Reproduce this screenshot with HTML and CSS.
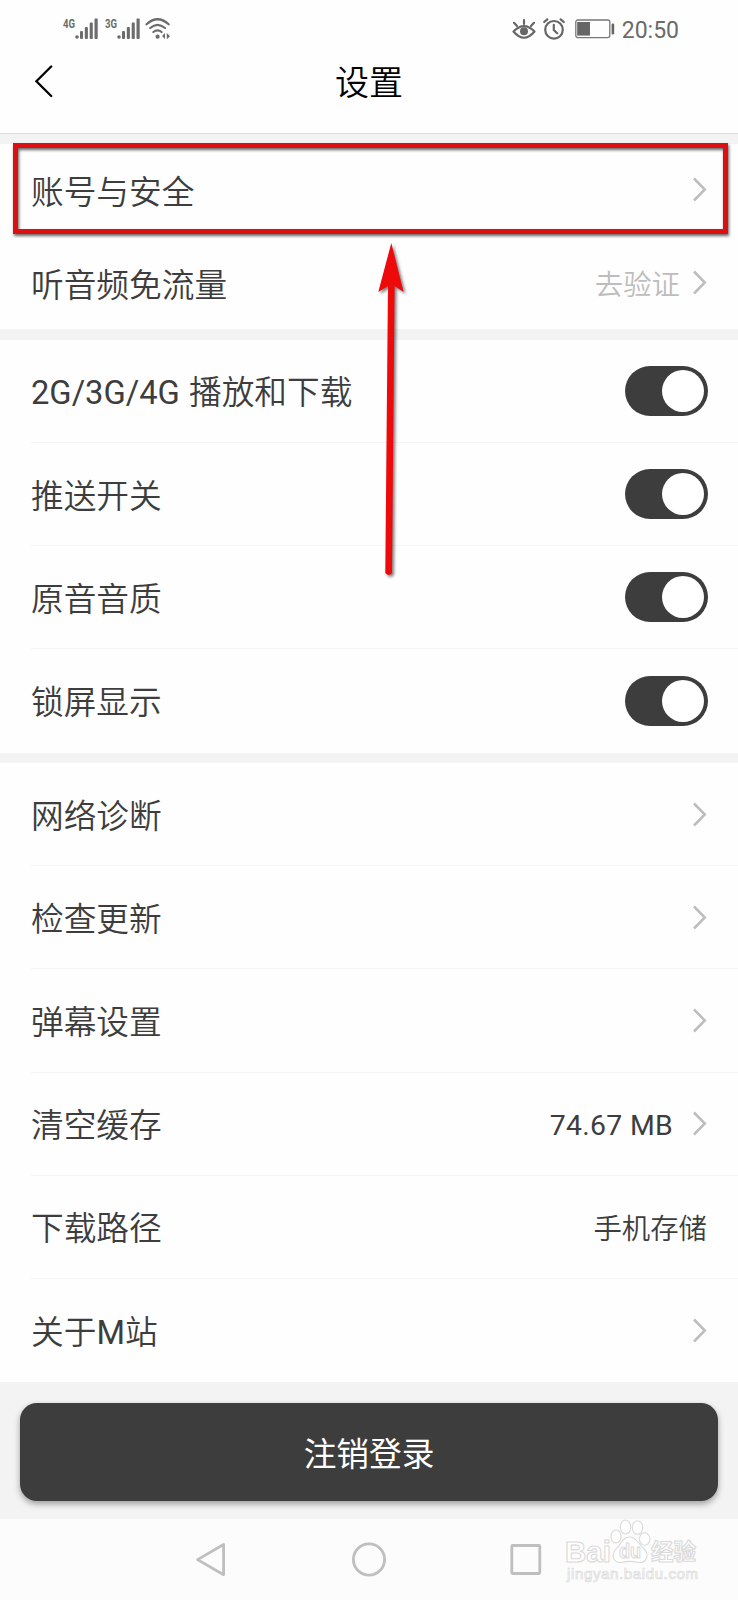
FILE: index.html
```html
<!DOCTYPE html>
<html lang="zh-CN">
<head>
    <meta charset="UTF-8">
    <meta name="viewport" content="width=device-width, initial-scale=1.0">
    <title>设置</title>
    <link rel="stylesheet" href="styles.css">
</head>
<body>
    <svg class="defs" width="0" height="0">
        <symbol id="chevron" viewBox="0 0 14 25">
            <path d="M1 1.5 L11.8 12.5 L1 23.5" fill="none" stroke="#bdbdbd" stroke-width="2.5"/>
        </symbol>
        <symbol id="signal" viewBox="0 0 24 22">
            <g fill="#6c6c6c">
                <circle cx="2" cy="19" r="1.8"/>
                <rect x="5" y="13" width="3" height="8" rx="1"/>
                <rect x="9.8" y="9" width="3.1" height="12" rx="1"/>
                <rect x="14.7" y="4.6" width="3.1" height="16.4" rx="1"/>
                <rect x="19.5" y="0.6" width="3.2" height="20.4" rx="1"/>
            </g>
        </symbol>
    </svg>
    <div id="content">
        <header>
            <div class="status">
                <div class="statusLeft">
                    <svg class="net" width="13" height="20"><text x="0" y="13.5" textLength="12" lengthAdjust="spacingAndGlyphs">4G</text></svg>
                    <svg class="signal"><use href="#signal"/></svg>
                    <svg class="net second" width="13" height="20"><text x="0" y="13.5" textLength="12" lengthAdjust="spacingAndGlyphs">3G</text></svg>
                    <svg class="signal"><use href="#signal"/></svg>
                    <svg class="wifi" width="26" height="22" viewBox="0 0 26 22">
                        <g fill="none" stroke="#6c6c6c" stroke-width="2.2" stroke-linecap="round">
                            <path d="M1.5 6.3 Q12.5 -3.8 23.7 6.3"/>
                            <path d="M5.2 10 Q12.5 3.6 20 10"/>
                            <path d="M8.4 14 Q12.5 10.6 16.6 14"/>
                        </g>
                        <circle cx="12.6" cy="18.7" r="2.1" fill="#6c6c6c"/>
                        <path d="M17 18 L20 15 V21 Z M25 18.2 L21.8 15 V21.2 Z" fill="#6c6c6c"/>
                    </svg>
                </div>
                <div class="statusRight">
                    <svg class="eye" width="24" height="22" viewBox="0 0 24 22">
                        <g fill="none" stroke="#666" stroke-width="2.2" stroke-linecap="round">
                            <path d="M1.5 12.5 Q12 1.8 22.5 12.5 Q12 25 1.5 12.5 Z" stroke-linejoin="round"/>
                            <path d="M12 5 V1.2 M5 7 L2 3.8 M19 7 L22 3.8"/>
                        </g>
                        <circle cx="12" cy="12.2" r="4" fill="#666"/>
                    </svg>
                    <svg class="alarm" width="22" height="22" viewBox="0 0 22 22">
                        <g fill="none" stroke="#666" stroke-width="2.2" stroke-linecap="round">
                            <circle cx="11" cy="11.8" r="8.8"/>
                            <path d="M10.8 6.8 V12 L14.2 15.3 M1.2 4 L4.3 1.3 M20.8 4 L17.7 1.3"/>
                        </g>
                    </svg>
                    <svg class="battery" width="40" height="20" viewBox="0 0 40 20">
                        <rect x="0.8" y="1" width="34" height="17.6" rx="2" fill="none" stroke="#777" stroke-width="1.3"/>
                        <rect x="2.2" y="3" width="12.8" height="13.6" fill="#666"/>
                        <rect x="36.6" y="4.5" width="2.6" height="11" rx="1.2" fill="#666"/>
                    </svg>
                    <span class="time">20:50</span>
                </div>
            </div>
            <div class="title">
                <svg class="back" width="18" height="33" viewBox="0 0 18 33">
                    <path d="M16.2 1.5 L1.4 16.2 L16.2 31" fill="none" stroke="#000" stroke-width="2.3" stroke-linecap="round"/>
                </svg>
                <h1>设置</h1>
            </div>
        </header>

        <section class="account">
            <div class="row"><label>账号与安全</label><svg class="chevron"><use href="#chevron"/></svg></div>
            <div class="row"><label>听音频免流量</label><span class="hint">去验证</span><svg class="chevron"><use href="#chevron"/></svg></div>
        </section>

        <section>
            <div class="row"><label><span class="latin">2G/3G/4G </span>播放和下载</label><span class="switch"></span></div>
            <div class="row"><label>推送开关</label><span class="switch"></span></div>
            <div class="row"><label>原音音质</label><span class="switch"></span></div>
            <div class="row"><label>锁屏显示</label><span class="switch"></span></div>
        </section>

        <section>
            <div class="row"><label>网络诊断</label><svg class="chevron"><use href="#chevron"/></svg></div>
            <div class="row"><label>检查更新</label><svg class="chevron"><use href="#chevron"/></svg></div>
            <div class="row"><label>弹幕设置</label><svg class="chevron"><use href="#chevron"/></svg></div>
            <div class="row"><label>清空缓存</label><span class="value size">74.67 MB</span><svg class="chevron"><use href="#chevron"/></svg></div>
            <div class="row"><label>下载路径</label><span class="value">手机存储</span></div>
            <div class="row"><label>关于<span class="latin">M</span>站</label><svg class="chevron"><use href="#chevron"/></svg></div>
        </section>

        <div class="logout">
            <button type="button">注销登录</button>
        </div>

        <footer>
            <svg width="32" height="36" viewBox="0 0 32 36">
                <path d="M27.6 2.5 V32.7 L1.6 17.6 Z" fill="none" stroke="#bfbfbf" stroke-width="2.8" stroke-linejoin="round"/>
            </svg>
            <svg width="36" height="36" viewBox="0 0 36 36">
                <circle cx="18" cy="17.5" r="15.6" fill="none" stroke="#bfbfbf" stroke-width="2.8"/>
            </svg>
            <svg width="32" height="36" viewBox="0 0 32 36">
                <rect x="1.8" y="3.5" width="28" height="28" rx="1" fill="none" stroke="#bfbfbf" stroke-width="2.8"/>
            </svg>
        </footer>

        <!-- highlight box and arrow -->
        <div class="mark"></div>
        <svg class="arrow" width="40" height="345" viewBox="0 0 40 345">
            <path d="M21.3 3 L33.6 52 L24.6 46 L22 333 Q18.5 337 15.3 333 L18 46 L8.3 52 Z" fill="#ee0a0a"/>
        </svg>

        <!-- watermark -->
        <svg class="watermark" width="150" height="75" viewBox="0 0 150 75">
            <g fill="#fff" stroke="#dadada" stroke-width="1.1">
                <text x="5" y="51.5" font-size="30" font-weight="700" textLength="46" lengthAdjust="spacingAndGlyphs">Bai</text>
                <ellipse cx="56" cy="26.5" rx="5" ry="6.5"/>
                <ellipse cx="65.5" cy="17" rx="5.2" ry="7"/>
                <ellipse cx="77.5" cy="17.5" rx="5.2" ry="6.8"/>
                <ellipse cx="84.7" cy="29" rx="5.2" ry="6.3"/>
                <path d="M70 27 C77 27 79 35 84 39 C90 45 86 53 79 52.5 C73 51 67 51 61 52.5 C53 53 51 45 56 39 C61 35 62 27 70 27 Z"/>
                <text x="59" y="48" font-size="20" font-weight="700" textLength="22" lengthAdjust="spacingAndGlyphs">du</text>
                <text class="cjk" x="91" y="50" font-size="22.5" font-weight="700" textLength="45">经验</text>
                <text x="7" y="69" font-size="15" stroke-width="0.7" textLength="131">jingyan.baidu.com</text>
            </g>
        </svg>
    </div>
</body>
</html>
```
FILE: styles.css
```css
html, body {
    margin: 0; padding: 0;
    background: #f3f3f3;
    font-family: Roboto, "Noto Sans CJK SC", sans-serif;
    color: #3d3d3d;
}
#content {
    position: relative;
    width: 738px; height: 1600px;
    overflow: hidden;
    display: flex; flex-direction: column;
}
.defs { position: absolute; }
header {
    height: 133px;
    background: #fefefe;
    border-bottom: 1px solid #dcdcdc;
    margin-bottom: 10px;
}
.status {
    display: flex; justify-content: space-between;
    height: 50px;
    box-sizing: border-box;
    padding: 18px 59px 0 63px;
}
.statusLeft, .statusRight { display: flex; align-items: flex-start; }
.net {
    margin: -4px -1px 0 0;
    font: 700 12.5px Roboto, sans-serif;
    fill: #6c6c6c;
}
.second { margin-left: 6px; }
.signal { width: 24px; height: 22px; }
.wifi { margin-left: 4px; }
.eye { margin: 1px 7px 0 0; }
.alarm { margin-right: 10px; }
.battery { margin: 1px 7px 0 0; }
.time { padding-top: 1px; font-size: 23px; line-height: 24px; color: #6a6a6a; }
.title {
    display: grid;
    grid-template-columns: 60px 1fr 60px;
    align-items: center;
    height: 62px;
}
.back { margin-left: 35px; }
h1 {
    margin: 0; padding-top: 3px;
    text-align: center;
    font-size: 34px; line-height: 40px; font-weight: 350;
    color: #000;
}
section { background: #fefefe; margin-bottom: 10.4px; }
.row {
    display: flex; align-items: center;
    height: 103.2px;
    margin-left: 31px; padding-right: 31px;
    box-sizing: border-box;
    border-bottom: 1px solid #f5f5f5;
}
.row:last-child { border-bottom-color: transparent; }
.account { margin-bottom: 10.5px; }
.account .row { height: 92.7px; border-bottom-color: transparent; }
.row label {
    flex: 1;
    padding-top: 5px;
    font-size: 32.7px; line-height: 40px; font-weight: 350;
}
.account .row label, .account .row .hint { padding-top: 7px; }
.row .latin { font-weight: 400; word-spacing: 1px; }
.chevron { width: 14px; height: 25px; }
.hint, .value {
    padding-top: 6px;
    font-size: 28.4px; line-height: 36px; font-weight: 350;
}
.hint { color: #bdbdbd; margin-right: 13px; }
.size { margin-right: 20px; padding-top: 5px; font-weight: 400; letter-spacing: 0.3px; }
.switch {
    display: flex; justify-content: flex-end;
    width: 83px; height: 50px;
    box-sizing: border-box;
    padding: 4px;
    margin-right: -1px;
    border-radius: 25px;
    background: #3d3d3d;
}
.switch::after {
    content: "";
    width: 42px; height: 42px;
    border-radius: 50%;
    background: #fff;
}
.logout { padding: 10.4px 20px 18px; }
button {
    display: block;
    width: 100%; height: 98.5px;
    padding: 5px 0 0;
    border: 0; border-radius: 17px;
    background: #3d3d3d;
    color: #fff;
    font: 400 32.7px/40px Roboto, "Noto Sans CJK SC", sans-serif;
    box-shadow: 0 3px 6px rgba(0, 0, 0, 0.35);
}
footer {
    flex: 1;
    display: flex; justify-content: space-between; align-items: center;
    padding: 1px 196px 0;
    background: #fcfcfc;
}
.mark {
    position: absolute;
    left: 13px; top: 143px;
    width: 715px; height: 91px;
    box-sizing: border-box;
    border: 5px solid #dc1010;
    filter: drop-shadow(1px 2px 1.5px rgba(0, 0, 0, 0.6));
}
.arrow {
    position: absolute;
    left: 370px; top: 240px;
    filter: drop-shadow(2px 2px 1.5px rgba(0, 0, 0, 0.5));
}
.watermark {
    position: absolute;
    left: 560px; top: 1510px;
    font-family: "Liberation Sans", sans-serif;
}
.cjk { font-family: "Noto Sans CJK SC", sans-serif; }
```
